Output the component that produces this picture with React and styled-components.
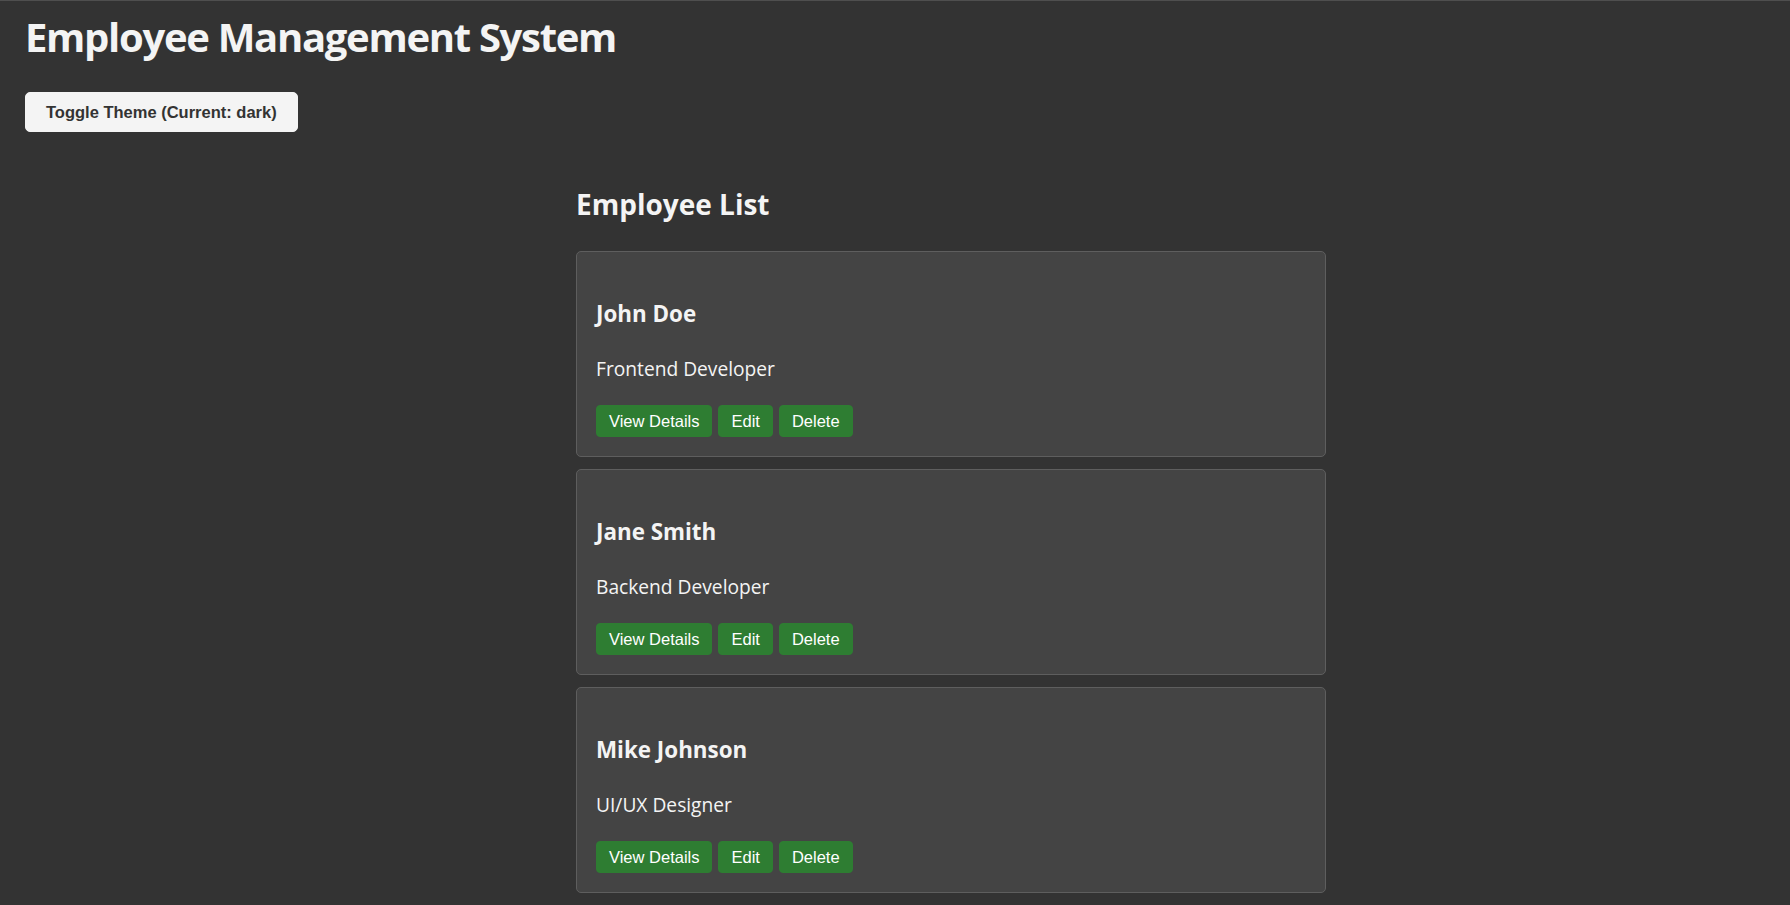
import React, { useState } from 'react';
import styled, { createGlobalStyle } from 'styled-components';

const GlobalStyle = createGlobalStyle`
  html, body {
    margin: 0;
    padding: 0;
    background: #333333;
  }
  body {
    font-family: "Open Sans", "Noto Sans", sans-serif;
    color: #f4f4f4;
  }
`;

const Page = styled.div`
  min-height: 905px;
  box-sizing: border-box;
  border-top: 1px solid #4f4f4f;
  padding: 12px 25px 0 25px;
`;

const Title = styled.h1`
  margin: 0 0 31px 0;
  font-size: 40px;
  line-height: 48px;
  font-weight: 700;
  letter-spacing: -1.3px;
`;

const ThemeButton = styled.button`
  display: block;
  padding: 10px 20px;
  font-family: "Liberation Sans", Arial, sans-serif;
  font-size: 16.5px;
  line-height: 18px;
  font-weight: 700;
  color: #333333;
  background: #f4f4f4;
  border: 1px solid #f4f4f4;
  border-radius: 5px;
  cursor: pointer;
`;

const Main = styled.main`
  margin-left: 551px;
  width: 750px;
`;

const ListTitle = styled.h2`
  margin: 55px 0 30px 0;
  font-size: 28px;
  line-height: 34px;
  font-weight: 700;
`;

const Card = styled.div`
  box-sizing: border-box;
  height: 206px;
  margin-bottom: 12px;
  padding: 20px 19px;
  background: #444444;
  border: 1px solid #5e5e5e;
  border-radius: 5px;
`;

const Name = styled.h3`
  margin: 28px 0 30px 0;
  font-size: 22.4px;
  line-height: 27px;
  font-weight: 700;
`;

const Role = styled.p`
  margin: 0 0 25px 0;
  font-size: 19.2px;
  line-height: 23px;
`;

const Actions = styled.div`
  display: flex;
  gap: 6px;
`;

const ActionButton = styled.button`
  padding: 6px 12px;
  font-family: "Liberation Sans", Arial, sans-serif;
  font-size: 16.5px;
  line-height: 18px;
  color: #ffffff;
  background: #2e7d32;
  border: 1px solid #2e7d32;
  border-radius: 4px;
  cursor: pointer;
`;

const employees = [
  { id: 1, name: 'John Doe', role: 'Frontend Developer' },
  { id: 2, name: 'Jane Smith', role: 'Backend Developer' },
  { id: 3, name: 'Mike Johnson', role: 'UI/UX Designer' },
];

const App = () => {
  const [theme, setTheme] = useState('dark');

  return (
    <Page>
      <GlobalStyle />
      <Title>Employee Management System</Title>
      <ThemeButton onClick={() => setTheme(theme === 'dark' ? 'light' : 'dark')}>
        {`Toggle Theme (Current: ${theme})`}
      </ThemeButton>
      <Main>
        <ListTitle>Employee List</ListTitle>
        {employees.map(emp => (
          <Card key={emp.id}>
            <Name>{emp.name}</Name>
            <Role>{emp.role}</Role>
            <Actions>
              <ActionButton>View Details</ActionButton>
              <ActionButton>Edit</ActionButton>
              <ActionButton>Delete</ActionButton>
            </Actions>
          </Card>
        ))}
      </Main>
    </Page>
  );
};

export default App;
